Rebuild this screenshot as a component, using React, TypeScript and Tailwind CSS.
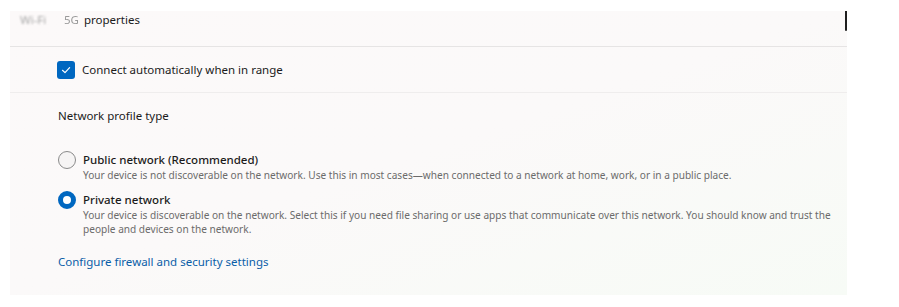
export default function App() {
  return (
    <div className="w-[899px] h-[307px] bg-white pt-[11px] pl-[10px] font-['Noto_Sans',sans-serif] text-[#1b1b1b]">
      <div className="relative w-[837px] h-[284px] bg-gradient-to-br from-[#fcf9f9] via-[#fbf9f9] to-[#f7fbf6]">
        <div className="absolute right-0 top-0 w-[2px] h-[20px] bg-[#1f1f1f] rounded-b" />
        <div className="h-[36px] border-b border-[#e6e4e4] flex items-start pl-[10px]">
          <span className="text-[11.5px] leading-[18px] text-[#a8a8a8] blur-[1px] w-[44px] overflow-hidden whitespace-nowrap">Wi-Fi</span>
          <span className="text-[11.5px] leading-[18px] text-[#9a9a9a] blur-[0.6px] w-[20px] whitespace-nowrap">5G</span>
          <span className="text-[11.5px] leading-[18px]">properties</span>
        </div>
        <div className="h-[46px] border-b border-[#efeded] flex items-center pl-[47px] gap-[7px]">
          <span className="w-[18px] h-[18px] rounded-[3px] bg-[#0067c0] flex items-center justify-center">
            <svg width="12" height="12" viewBox="0 0 12 12" fill="none">
              <path d="M2.5 6.3 L5 8.6 L9.6 3.6" stroke="white" strokeWidth="1.2" strokeLinecap="round" strokeLinejoin="round" />
            </svg>
          </span>
          <span className="text-[11.5px]">Connect automatically when in range</span>
        </div>
        <div className="pl-[48px] pt-[14px] pr-[10px]">
          <div className="text-[11.5px] leading-[18px]">Network profile type</div>
          <div className="mt-[26px] flex gap-[7px]">
            <span className="w-[18px] h-[18px] shrink-0 rounded-full border border-[#8a8a8a] bg-[#f6f4f4]" />
            <div>
              <div className="text-[11.5px] leading-[17px] font-medium">Public network (Recommended)</div>
              <div className="text-[10.1px] leading-[14px] text-[#6b6b6b]">
                Your device is not discoverable on the network. Use this in most cases—when connected to a network at home, work, or in a public place.
              </div>
            </div>
          </div>
          <div className="mt-[9px] flex gap-[7px]">
            <span className="w-[18px] h-[18px] shrink-0 rounded-full border-[5px] border-[#0067c0] bg-white" />
            <div>
              <div className="text-[11.5px] leading-[17px] font-medium">Private network</div>
              <div className="text-[10.1px] leading-[14px] text-[#6b6b6b] w-[760px]">
                Your device is discoverable on the network. Select this if you need file sharing or use apps that communicate over this network. You should know and trust the people and devices on the network.
              </div>
            </div>
          </div>
          <div className="mt-[17px] text-[11.5px] leading-[18px] text-[#0a5ea8]">Configure firewall and security settings</div>
        </div>
      </div>
    </div>
  );
}
